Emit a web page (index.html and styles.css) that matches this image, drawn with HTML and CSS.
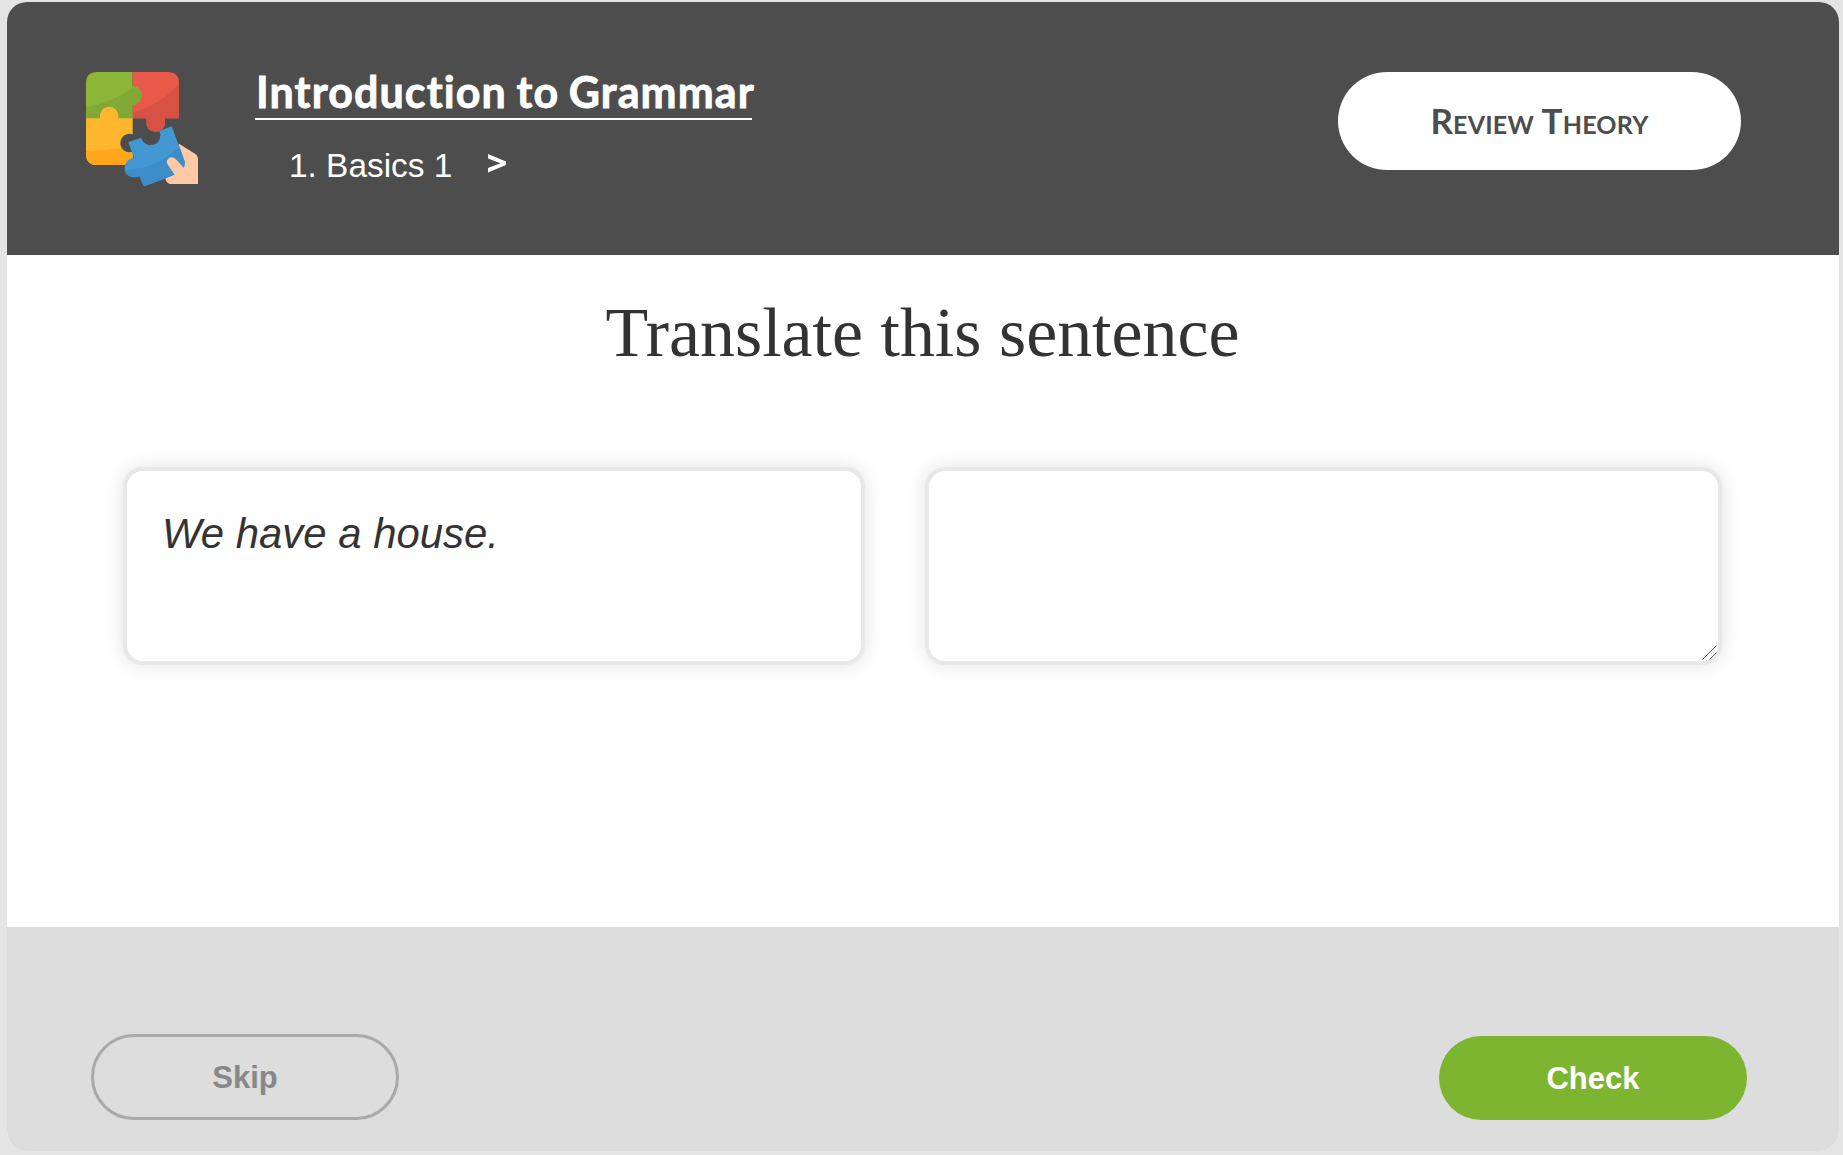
FILE: index.html
```html
<!DOCTYPE html>
<html lang="en">
<head>
<meta charset="utf-8">
<title>Introduction to Grammar</title>
<link rel="stylesheet" href="styles.css">
</head>
<body>
<main class="card">
  <header class="header">
    <svg class="logo" viewBox="45 33 342 348" aria-hidden="true">
      <path fill="#e9594a" d="M187 36H293Q327 36 327 70V175H285V188A28 28 0 0 1 229 188V175H187Z"/>
      <path fill="#d65245" d="M327 70V175H285V188A28 28 0 0 1 229 188V175H187V158Q272 136 327 70Z"/>
      <path fill="#8bb638" d="M82 36H187V78A28 28 0 1 1 187 134V176H48V70Q48 36 82 36Z"/>
      <path fill="#80a936" d="M187 84V78A28 28 0 1 1 187 134V176H48V142Q130 126 187 84Z"/>
      <path fill="#ffb62f" d="M48 175H90V163A28 28 0 0 1 145 163V175H188V223A28 28 0 1 0 188 276V315H82Q48 315 48 281Z"/>
      <path fill="#ffa61a" d="M48 273Q107 272 154 263Q166 282 188 276V315H82Q48 315 48 281Z"/>
      <path fill="#ffc9a5" d="M327 251L375 281Q384 287 384 298V372H305Q288 370 287 350Z"/>
      <path fill="#4398d2" d="M175 247L214 233A29 29 0 1 0 268 213L305 199L345 307L342 323L314 345L222 379L208 348A29 29 0 1 1 192 294Z"/>
      <path fill="#3e8dcb" d="M163 330Q267 327 328 259L345 307L342 323L314 345L222 379L208 348Q170 359 163 330Z"/>
      <path fill="#ffc9a5" d="M341 323L317 297Q306 287 295 296Q286 304 294 315L314 344L286 356Q290 372 305 372H370V310Z"/>
    </svg>
    <div class="titles">
      <a class="title">Introduction to Grammar</a>
      <div class="crumb"><span class="lesson">1. Basics 1</span><svg class="chevron" viewBox="0 0 18 19" aria-hidden="true"><path d="M0 0L18 7.5V11L0 18.5V14L12.5 9.2L0 4.5Z"/></svg></div>
    </div>
    <button class="review">Review Theory</button>
  </header>
  <section class="exercise">
    <h1 class="prompt">Translate this sentence</h1>
    <div class="boxes">
      <div class="box source">We have a house.</div>
      <div class="answer-wrap">
        <textarea class="box answer" aria-label="Translation"></textarea>
        <svg class="grip" viewBox="0 0 15 15" aria-hidden="true"><path d="M0.5 14.5L14.5 0.5M7.5 14.5L14.5 7.5"/></svg>
      </div>
    </div>
  </section>
  <footer class="footer">
    <button class="btn skip">Skip</button>
    <button class="btn check">Check</button>
  </footer>
</main>
</body>
</html>
```
FILE: styles.css
```css
* { box-sizing: border-box; }
body {
  margin: 0;
  height: 1155px;
  padding: 2px 4px 4px 7px;
  overflow: hidden;
  background: #e4e4e4;
  font-family: "Liberation Sans", Arial, sans-serif;
}
button { border: 0; font-family: inherit; }
.card {
  display: flex;
  flex-direction: column;
  height: 1149px;
  border-radius: 20px;
  overflow: hidden;
  background: #fff;
}
.header {
  display: flex;
  align-items: flex-start;
  height: 253px;
  padding: 69px 98px 0 78px;
  background: #4d4d4d;
  color: #fff;
}
.logo { width: 114px; height: 116px; }
.titles { margin-left: 56px; }
.title {
  display: block;
  width: 497px;
  height: 49px;
  padding-left: 1px;
  border-bottom: 2px solid #fff;
  font: 700 43px/42px Lato, sans-serif;
  letter-spacing: 1.1px;
  word-spacing: -2px;
  -webkit-text-stroke: 0.8px #fff;
  white-space: nowrap;
}
.crumb {
  display: flex;
  align-items: flex-start;
  margin: 26px 0 0 34px;
}
.lesson { padding-top: 1px; font-size: 33.4px; line-height: 38px; }
.chevron { width: 18px; height: 19px; margin: 8px 0 0 36px; fill: #fff; }
.review {
  width: 403px;
  height: 98px;
  margin: 1px 0 0 auto;
  padding: 0 0 3px;
  border-radius: 49px;
  background: #fff;
  color: #4d4d4d;
  font: 700 35px/40px Lato, sans-serif;
  font-variant: small-caps;
  letter-spacing: 0.2px;
}
.exercise { height: 672px; padding: 38px 117px 0 116px; }
.prompt {
  margin: 0;
  height: 174px;
  color: #333;
  font: 400 69.9px/80px "Liberation Serif", "Times New Roman", serif;
  text-align: center;
}
.boxes { display: flex; gap: 60px; }
.box {
  height: 198px;
  border: 4px solid #e8e8e8;
  border-radius: 20px;
  background: #fff;
  box-shadow: 0 0 20px rgba(0, 0, 0, 0.12);
}
.source {
  width: 742px;
  padding: 39px 35px;
  color: #333;
  font-size: 41.9px;
  font-style: italic;
  line-height: 48px;
}
.answer-wrap { position: relative; width: 798px; height: 198px; }
.answer {
  display: block;
  width: 100%;
  padding: 34px;
  color: #333;
  font: italic 42px "Liberation Sans", Arial, sans-serif;
  resize: none;
}
.grip {
  position: absolute;
  right: 5px;
  bottom: 5px;
  width: 15px;
  height: 15px;
  fill: none;
  stroke: #555;
  stroke-width: 1;
}
.footer {
  display: flex;
  flex: 1;
  align-items: flex-start;
  justify-content: space-between;
  padding: 107px 92px 0 84px;
  background: #ddd;
}
.btn {
  width: 308px;
  padding: 2px 0 0;
  border-radius: 43px;
  font-size: 31px;
  font-weight: 700;
}
.skip { height: 86px; border: 3px solid #a9a9a9; background: transparent; color: #888; }
.check { height: 84px; margin-top: 2px; background: #7eb530; color: #fff; }
```
